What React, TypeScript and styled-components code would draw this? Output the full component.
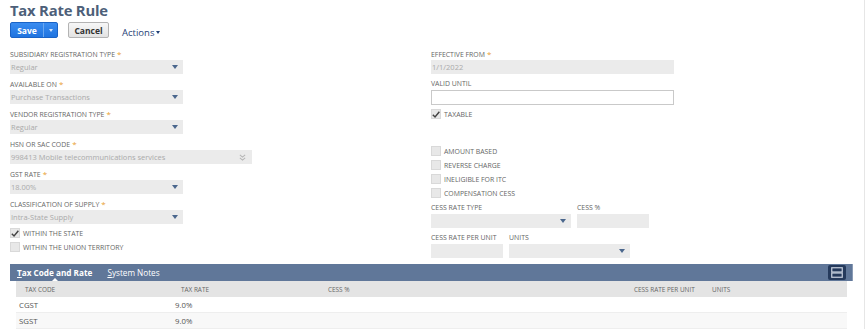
import React from "react";
import styled, { createGlobalStyle } from "styled-components";

const Global = createGlobalStyle`
  html, body { margin: 0; padding: 0; background: #fff; }
  body { font-family: "Open Sans", "Liberation Sans", sans-serif; color: #333; }
  * { box-sizing: border-box; }
`;

const Page = styled.div`
  width: 865px;
  height: 329px;
  overflow: hidden;
  padding: 0 0 0 10px;
  border-right: 1px solid #e6e6e6;
`;

const Title = styled.h1`
  margin: 0;
  font-size: 14.8px;
  line-height: 20px;
  font-weight: 700;
  color: #4d5f79;
  letter-spacing: -0.2px;
`;

const Toolbar = styled.div`
  display: flex;
  align-items: center;
  height: 16px;
  margin-top: 2px;
`;

const SplitButton = styled.div`
  display: flex;
  height: 16px;
  border: 1px solid #1a63c6;
  border-radius: 2px;
  background: linear-gradient(#3a8cf0, #1f74e0);
  overflow: hidden;
`;

const SaveLabel = styled.span`
  width: 32px;
  display: flex;
  align-items: center;
  justify-content: center;
  color: #fff;
  font-weight: 700;
  font-size: 8.5px;
`;

const SplitCaret = styled.span`
  width: 14px;
  display: flex;
  align-items: center;
  justify-content: center;
  border-left: 1px solid #6aa7f0;
  &::after {
    content: "";
    border-left: 2.5px solid transparent;
    border-right: 2.5px solid transparent;
    border-top: 3px solid #cfe2fb;
  }
`;

const CancelButton = styled.button`
  margin-left: 10px;
  width: 41px;
  height: 16px;
  padding: 0;
  border: 1px solid #b3b3b3;
  border-radius: 2px;
  background: linear-gradient(#f7f7f7, #e3e3e3);
  font-family: inherit;
  font-weight: 700;
  font-size: 8.5px;
  color: #333;
`;

const ActionsLink = styled.span`
  margin-left: 13px;
  margin-top: 5px;
  font-size: 9.5px;
  color: #1f3f77;
  display: flex;
  align-items: center;
  gap: 2px;
  &::after {
    content: "";
    border-left: 2.5px solid transparent;
    border-right: 2.5px solid transparent;
    border-top: 3px solid #1f3f77;
  }
`;

const Form = styled.div`
  display: grid;
  grid-template-columns: 421px 1fr;
  margin-top: 11px;
  height: 215px;
`;

const Column = styled.div`
  display: flex;
  flex-direction: column;
`;

const Field = styled.div<{ $mb?: number }>`
  display: flex;
  flex-direction: column;
  margin-bottom: ${(p) => (p.$mb ?? 5)}px;
`;

const Label = styled.div`
  font-size: 6.9px;
  line-height: 10px;
  height: 10px;
  margin-bottom: 1px;
  color: #666;
  text-transform: uppercase;
  white-space: nowrap;
  &[data-req="1"]::after {
    content: " *";
    color: #e8a030;
    font-size: 8px;
  }
`;

const Select = styled.div<{ $w: number }>`
  width: ${(p) => p.$w}px;
  height: 14px;
  background: #ebebeb;
  display: flex;
  align-items: center;
  justify-content: space-between;
  padding: 0 5px 0 1px;
  font-size: 7.5px;
  color: #aaa;
  white-space: nowrap;
`;

const Arrow = styled.span`
  border-left: 3.5px solid transparent;
  border-right: 3.5px solid transparent;
  border-top: 4px solid #4b678d;
`;

const DoubleChevron = styled.svg`
  width: 7px;
  height: 7px;
  margin-right: 1px;
`;

const TextInput = styled.div<{ $w: number; $border?: boolean }>`
  width: ${(p) => p.$w}px;
  height: ${(p) => (p.$border ? 15 : 14)}px;
  background: ${(p) => (p.$border ? "#fff" : "#ebebeb")};
  border: ${(p) => (p.$border ? "1px solid #c9c9c9" : "none")};
  font-size: 7.5px;
  color: #aaa;
  display: flex;
  align-items: center;
  padding-left: 1px;
`;

const CheckRow = styled.div<{ $mt?: number }>`
  display: flex;
  align-items: center;
  height: 14px;
  margin-top: ${(p) => p.$mt ?? 0}px;
  font-size: 6.9px;
  color: #666;
  gap: 3px;
`;

const Box = styled.span`
  width: 10px;
  height: 10px;
  background: #e8e8e8;
  border: 1px solid #d9d9d9;
  display: inline-flex;
  align-items: center;
  justify-content: center;
`;

const FieldRow = styled.div<{ $mt?: number }>`
  display: flex;
  gap: 6px;
  margin-top: ${(p) => p.$mt ?? 0}px;
`;

const Tabs = styled.div`
  width: 843px;
`;

const TabBar = styled.div`
  height: 17px;
  background: #607799;
  display: flex;
  align-items: center;
  padding: 0 6px 0 7px;
  border-right: 1px solid #8a9bb5;
`;

const Tab = styled.span<{ $active?: boolean }>`
  font-size: 8.2px;
  font-weight: ${(p) => (p.$active ? 700 : 400)};
  color: #fff;
  margin-right: 15px;
  position: relative;
  height: 17px;
  line-height: 17px;
  ${(p) =>
    p.$active &&
    `&::after {
      content: "";
      position: absolute;
      left: 50%;
      bottom: 0;
      margin-left: -3px;
      border-left: 3px solid transparent;
      border-right: 3px solid transparent;
      border-bottom: 3px solid #fff;
    }`}
  u { text-decoration: underline; text-underline-offset: 1px; }
`;

const Spacer = styled.div`
  flex: 1;
`;

const ViewButton = styled.span`
  width: 18px;
  height: 15px;
  background: #253a5c;
  border-radius: 2px;
  display: flex;
  align-items: center;
  justify-content: center;
`;

const Table = styled.div`
  margin: 0 6px;
`;

const Row = styled.div<{ $head?: boolean; $alt?: boolean }>`
  display: grid;
  grid-template-columns: 156px 147px 306px 78px 1fr;
  height: 16px;
  align-items: center;
  background: ${(p) => (p.$head ? "#e4e4e4" : p.$alt ? "#f8f8f8" : "#fff")};
  border-bottom: ${(p) => (p.$head ? "none" : "1px solid #eeeeee")};
  font-size: ${(p) => (p.$head ? "6.4px" : "7.8px")};
  color: ${(p) => (p.$head ? "#666" : "#555")};
  padding-left: 3px;
  white-space: nowrap;
`;

const HeadCell = styled.span`
  padding-left: 6px;
`;

const Cell = styled.span``;

const Check = () => (
  <svg width="9" height="9" viewBox="0 0 10 10">
    <path d="M1 5.2 L3.8 8 L9.2 1.5" fill="none" stroke="#444" strokeWidth="1.8" />
  </svg>
);

const SelectField = ({
  label,
  value,
  w = 173,
  req = true,
  chevron = false,
  mb,
}: {
  label: string;
  value?: string;
  w?: number;
  req?: boolean;
  chevron?: boolean;
  mb?: number;
}) => (
  <Field $mb={mb}>
    <Label data-req={req ? "1" : "0"}>{label}</Label>
    <Select $w={w}>
      <span>{value}</span>
      {chevron ? (
        <DoubleChevron viewBox="0 0 8 8">
          <path d="M1 1 L4 3.5 L7 1 M1 4.5 L4 7 L7 4.5" fill="none" stroke="#b5b5b5" strokeWidth="1.2" />
        </DoubleChevron>
      ) : (
        <Arrow />
      )}
    </Select>
  </Field>
);

export default function App() {
  return (
    <>
      <Global />
      <Page>
        <Title>Tax Rate Rule</Title>
        <Toolbar>
          <SplitButton>
            <SaveLabel>Save</SaveLabel>
            <SplitCaret />
          </SplitButton>
          <CancelButton>Cancel</CancelButton>
          <ActionsLink>Actions</ActionsLink>
        </Toolbar>
        <Form>
          <Column>
            <SelectField label="Subsidiary Registration Type" value="Regular" />
            <SelectField label="Available On" value="Purchase Transactions" />
            <SelectField label="Vendor Registration Type" value="Regular" />
            <SelectField label="HSN or SAC Code" value="998413 Mobile telecommunications services" w={242} chevron />
            <SelectField label="GST Rate" value="18.00%" />
            <SelectField label="Classification of Supply" value="Intra-State Supply" mb={2} />
            <CheckRow>
              <Box>
                <Check />
              </Box>
              WITHIN THE STATE
            </CheckRow>
            <CheckRow>
              <Box />
              WITHIN THE UNION TERRITORY
            </CheckRow>
          </Column>
          <Column>
            <Field>
              <Label data-req="1">Effective From</Label>
              <TextInput $w={243}>1/1/2022</TextInput>
            </Field>
            <Field $mb={2}>
              <Label>Valid Until</Label>
              <TextInput $w={243} $border />
            </Field>
            <CheckRow>
              <Box>
                <Check />
              </Box>
              TAXABLE
            </CheckRow>
            <CheckRow $mt={23}>
              <Box />
              AMOUNT BASED
            </CheckRow>
            <CheckRow>
              <Box />
              REVERSE CHARGE
            </CheckRow>
            <CheckRow>
              <Box />
              INELIGIBLE FOR ITC
            </CheckRow>
            <CheckRow>
              <Box />
              COMPENSATION CESS
            </CheckRow>
            <FieldRow $mt={3}>
              <Field>
                <Label>Cess Rate Type</Label>
                <Select $w={140}>
                  <span />
                  <Arrow />
                </Select>
              </Field>
              <Field>
                <Label>Cess %</Label>
                <TextInput $w={72} />
              </Field>
            </FieldRow>
            <FieldRow>
              <Field>
                <Label>Cess Rate per Unit</Label>
                <TextInput $w={72} />
              </Field>
              <Field>
                <Label>Units</Label>
                <Select $w={121}>
                  <span />
                  <Arrow />
                </Select>
              </Field>
            </FieldRow>
          </Column>
        </Form>
        <Tabs>
          <TabBar>
            <Tab $active>
              <u>T</u>ax Code and Rate
            </Tab>
            <Tab>
              <u>S</u>ystem Notes
            </Tab>
            <Spacer />
            <ViewButton>
              <svg width="12" height="11" viewBox="0 0 12 11">
                <rect x="0.75" y="0.75" width="10.5" height="4.25" fill="none" stroke="#c9d2e0" strokeWidth="1.2" />
                <rect x="0.75" y="6" width="10.5" height="4.25" fill="none" stroke="#c9d2e0" strokeWidth="1.2" />
              </svg>
            </ViewButton>
          </TabBar>
          <Table>
            <Row $head>
              <HeadCell>TAX CODE</HeadCell>
              <HeadCell>TAX RATE</HeadCell>
              <HeadCell>CESS %</HeadCell>
              <HeadCell>CESS RATE PER UNIT</HeadCell>
              <HeadCell>UNITS</HeadCell>
            </Row>
            <Row>
              <Cell>CGST</Cell>
              <Cell>9.0%</Cell>
              <Cell />
              <Cell />
              <Cell />
            </Row>
            <Row $alt>
              <Cell>SGST</Cell>
              <Cell>9.0%</Cell>
              <Cell />
              <Cell />
              <Cell />
            </Row>
          </Table>
        </Tabs>
      </Page>
    </>
  );
}
